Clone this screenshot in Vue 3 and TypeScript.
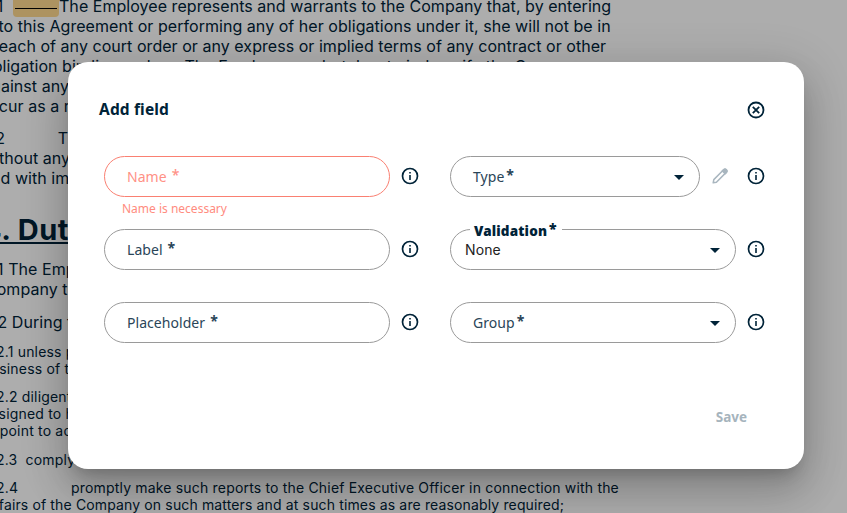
<script setup lang="ts">
import { ref } from 'vue'

interface Line {
  text: string
  x: number // start of the line, the page is scrolled a bit to the right
}

interface Block {
  kind: 'body' | 'heading' | 'small'
  gap: number
  lines: Line[]
}

interface Field {
  id: string
  label: string
  select?: boolean
  value?: string
  error?: string
  editable?: boolean
}

const blocks: Block[] = [
  {
    kind: 'body',
    gap: 0,
    lines: [
      { text: 'into this Agreement or performing any of her obligations under it, she will not be in', x: -15 },
      { text: 'breach of any court order or any express or implied terms of any contract or other', x: -17 },
      { text: 'obligation binding on her.\u00a0 The Employee undertakes to indemnify the Company', x: -17 },
      { text: 'against any claims', x: -18 },
      { text: 'occur as a re', x: -20 }
    ]
  },
  {
    kind: 'body',
    gap: 12,
    lines: [
      { text: '3.2\u2003\u2003\u2003 T', x: -19 },
      { text: 'without any', x: -18 },
      { text: 'and with im', x: -18 }
    ]
  },
  { kind: 'heading', gap: 25, lines: [{ text: '4. Dut', x: -18 }] },
  {
    kind: 'body',
    gap: 12,
    lines: [
      { text: '4.1 The Emp', x: -16 },
      { text: 'Company th', x: -15 }
    ]
  },
  { kind: 'body', gap: 13, lines: [{ text: '4.2 During t', x: -17 }] },
  {
    kind: 'small',
    gap: 11,
    lines: [
      { text: '4.2.1 unless p', x: -17 },
      { text: 'business of t', x: -18 }
    ]
  },
  {
    kind: 'small',
    gap: 11,
    lines: [
      { text: '4.2.2 diligent', x: -17 },
      { text: 'assigned to h', x: -17 },
      { text: 'appoint to ac', x: -17 }
    ]
  },
  { kind: 'small', gap: 12, lines: [{ text: '4.2.3\u00a0 comply', x: -17 }] }
]

const rows: Field[][] = [
  [
    { id: 'name', label: 'Name', error: 'Name is necessary' },
    { id: 'type', label: 'Type', select: true, editable: true }
  ],
  [
    { id: 'label', label: 'Label' },
    { id: 'validation', label: 'Validation', select: true, value: 'None' }
  ],
  [
    { id: 'placeholder', label: 'Placeholder' },
    { id: 'group', label: 'Group', select: true }
  ]
]

const open = ref(true)
</script>

<template>
  <div class="page">
    <div class="document">
      <div class="line body first">
        <span class="num">3.1</span>
        <span class="blank"><i></i></span>
        <span class="lead">The Employee represents and warrants to the Company that, by entering</span>
      </div>
      <div
        v-for="(block, i) in blocks"
        :key="i"
        :class="block.kind"
        :style="{ marginTop: block.gap + 'px' }"
      >
        <div v-for="line in block.lines" :key="line.text" class="line" :style="{ marginLeft: line.x + 'px' }">
          {{ line.text }}
        </div>
      </div>
      <div class="small last">
        <div class="line tabbed"><span class="num">4.2.4</span><span>promptly make such reports to the Chief Executive Officer in connection with the</span></div>
        <div class="line affairs">affairs of the Company on such matters and at such times as are reasonably required;</div>
      </div>
    </div>

    <div v-if="open" class="backdrop">
      <section class="dialog" role="dialog">
        <header class="head">
          <h2>Add field</h2>
          <button class="icon-btn" @click="open = false">
            <svg width="18" height="18" viewBox="0 0 18 18" fill="none" stroke="currentColor" stroke-width="1.8">
              <circle cx="9" cy="9" r="7.5" />
              <path d="M5.8 5.8l6.4 6.4M12.2 5.8l-6.4 6.4" />
            </svg>
          </button>
        </header>

        <div class="form">
          <div v-for="(row, r) in rows" :key="r" class="row">
            <div v-for="field in row" :key="field.id" class="cell">
              <div class="control">
                <div class="field" :class="{ invalid: field.error, select: field.select, filled: field.value }">
                  <span class="label">{{ field.label }}<span class="star">*</span></span>
                  <span v-if="field.value" class="value">{{ field.value }}</span>
                  <svg v-if="field.select" class="caret" width="10" height="5" viewBox="0 0 10 5">
                    <path d="M0 0h10L5 5z" fill="currentColor" />
                  </svg>
                </div>
                <svg v-if="field.editable" class="pencil" width="18" height="18" viewBox="0 0 18 18" fill="none" stroke="currentColor" stroke-width="1.5" stroke-linejoin="round">
                  <path d="M2.2 15.8l.6-3.2L12.6 2.8a1.7 1.7 0 0 1 2.6 2.6L5.4 15.2z" />
                  <path d="M11.4 3.9l2.8 2.8 1.2-1.3a1.7 1.7 0 0 0-2.7-2.7z" fill="currentColor" />
                </svg>
                <svg class="info" width="18" height="18" viewBox="0 0 18 18" fill="none" stroke="currentColor">
                  <circle cx="9" cy="9" r="7.5" stroke-width="1.7" />
                  <path d="M9 8v5M9 5v1.6" stroke-width="1.6" />
                </svg>
              </div>
              <p v-if="field.error" class="error">{{ field.error }}</p>
            </div>
          </div>
        </div>

        <footer class="foot">
          <button class="save" disabled>Save</button>
        </footer>
      </section>
    </div>
  </div>
</template>

<style>
body {
  margin: 0;
  overflow: hidden;
}
</style>

<style scoped>
.page {
  position: relative;
  width: 847px;
  height: 513px;
  overflow: hidden;
  background: #fff;
  color: #002338;
  font-family: Inter, "Liberation Sans", sans-serif;
}

.document {
  display: flow-root;
}

.line {
  white-space: nowrap;
}

.body {
  font-size: 16px;
  line-height: 20px;
  letter-spacing: 0.045px;
}

.first {
  display: flex;
  height: 20px;
  margin-top: -4px;
}

.first .num {
  width: 29px;
  margin-left: -16px;
}

.blank {
  box-sizing: border-box;
  width: 46px;
  height: 21px;
  padding: 12px 2px 0;
  border-radius: 4px;
  background: #ffd98f;
}

.blank i {
  display: block;
  height: 1px;
  background: #000;
}

.heading {
  font-size: 29px;
  font-weight: 700;
  line-height: 34px;
  letter-spacing: 0.5px;
  text-decoration: underline;
  text-decoration-thickness: 2px;
  text-underline-offset: 2px;
}

.small {
  font-size: 14px;
  line-height: 17px;
  letter-spacing: 0.18px;
}

.last {
  margin-top: 11px;
}

.tabbed {
  display: flex;
}

.tabbed .num {
  width: 88px;
  margin-left: -17px;
}

.affairs {
  margin-left: -14px;
  letter-spacing: 0.14px;
}

.backdrop {
  position: absolute;
  inset: 0;
  box-sizing: border-box;
  padding: 62px 0 0 68px;
  background: rgba(0, 0, 0, 0.32);
}

.dialog {
  display: flex;
  flex-direction: column;
  box-sizing: border-box;
  width: 736px;
  height: 407px;
  padding: 36px 39px 39px 36px;
  border-radius: 20px;
  background: #fff;
  box-shadow: 0 11px 15px -7px rgba(0, 0, 0, 0.2), 0 24px 38px 3px rgba(0, 0, 0, 0.14),
    0 9px 46px 8px rgba(0, 0, 0, 0.12);
  font-family: "Noto Sans", sans-serif;
}

.head {
  display: flex;
  align-items: center;
  justify-content: space-between;
  height: 24px;
}

.head h2 {
  margin: -2px 0 0 -5px;
  font-size: 15.5px;
  font-weight: 700;
  line-height: 24px;
  letter-spacing: 0.15px;
}

.icon-btn {
  display: flex;
  padding: 0;
  border: 0;
  background: none;
  color: #002338;
}

.form {
  display: grid;
  grid-auto-rows: 73px;
  margin-top: 34px;
}

.row {
  display: grid;
  grid-template-columns: 315px 315px;
  gap: 31px;
}

.control {
  display: flex;
  align-items: center;
  gap: 11px;
}

.field {
  position: relative;
  display: flex;
  flex: 1;
  align-items: center;
  box-sizing: border-box;
  height: 41px;
  padding: 0 15px 0 22px;
  border: 1px solid #9a9a9a;
  border-radius: 20.5px;
}

.label {
  font-size: 14px;
  line-height: 20px;
  letter-spacing: 0.05px;
  color: #2a4558;
}

.star {
  margin-left: 5px;
  font-size: 14px;
  font-weight: 700;
  line-height: 1;
  vertical-align: 2px;
}

.select .star {
  margin-left: 2px;
}

.invalid {
  border-color: #fa8072;
}

.invalid .label {
  color: #ff9186;
}

.invalid .star {
  font-weight: 500;
}

.filled {
  padding-left: 14px;
}

/* floated label cuts a notch in the outline */
.filled .label {
  position: absolute;
  top: -8px;
  left: 19px;
  padding: 0 5px 0 4px;
  background: #fff;
  color: #002338;
  font-size: 13.5px;
  font-weight: 900;
  line-height: 18px;
  letter-spacing: 0.15px;
}

.filled .star {
  font-weight: 900;
}

.value {
  color: #222;
  font-family: Inter, sans-serif;
  font-size: 14px;
  letter-spacing: 0.1px;
}

.caret {
  margin-top: 1px;
  margin-left: auto;
  color: #002338;
}

.info {
  flex: none;
  margin-bottom: 2px;
  color: #002338;
}

.pencil {
  flex: none;
  margin: 0 7px 1px 0;
  color: #a9b6bf;
}

.error {
  margin: 3px 0 0 18px;
  color: #ff8c80;
  font-size: 12px;
  line-height: 18px;
}

.foot {
  display: flex;
  justify-content: flex-end;
  margin-top: auto;
  padding-right: 18px;
}

.save {
  padding: 0;
  border: 0;
  background: none;
  color: #a6b4bd;
  font-family: inherit;
  font-size: 13.5px;
  font-weight: 700;
  line-height: 26px;
}
</style>
